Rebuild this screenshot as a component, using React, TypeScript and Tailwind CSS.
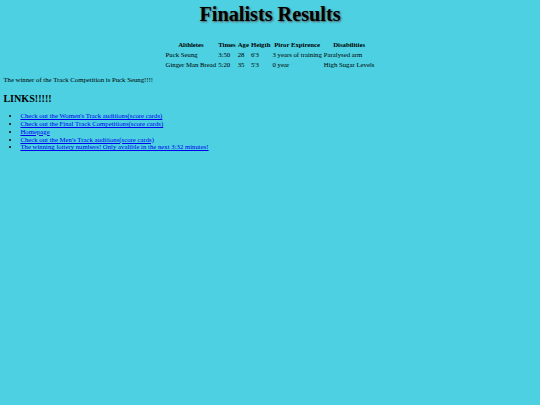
const rows = [
  ["Puck Seung", "3:50", "28", "6'3", "3 years of training", "Paralysed arm"],
  ["Ginger Man Bread", "5:20", "35", "5'3", "0 year", "High Sugar Levels"],
];

const links = [
  "Check out the Women's Track auditions(score cards)",
  "Check out the Final Track Competitions(score cards)",
  "Homepage",
  "Check out the Men's Track auditions(score cards)",
  "The winning lottery numbers! Only avalible in the next 3:32 minutes!",
];

export default function App() {
  return (
    <div className="min-h-screen bg-[#4dd0e1] px-[3.4px] pt-[3px] font-['Liberation_Serif',serif] text-[6.75px] text-black">
      <h1 className="text-center text-[20.25px] font-bold leading-[23px] [text-shadow:1px_1px_2px_#555]">
        Finalists Results
      </h1>

      <table className="mx-auto mt-[14px] border-separate border-spacing-x-[1px] border-spacing-y-0">
        <thead>
          <tr className="h-[10px] leading-[8px]">
            {["Althletes", "Times", "Age", "Heigth", "Piror Expirence", "Disabilities"].map((h) => (
              <th key={h} className="px-[0.5px] text-center font-bold">
                {h}
              </th>
            ))}
          </tr>
        </thead>
        <tbody>
          {rows.map((r) => (
            <tr key={r[0]} className="h-[10px] leading-[8px]">
              {r.map((c, i) => (
                <td key={i} className="px-[0.5px] text-left whitespace-nowrap">
                  {c}
                </td>
              ))}
            </tr>
          ))}
        </tbody>
      </table>

      <p className="mt-[6px] leading-[7.8px]">The winner of the Track Competition is Puck Seung!!!!</p>

      <h2 className="mt-[9px] text-[10.1px] font-bold leading-[11.6px]">LINKS!!!!!</h2>

      <ul className="mt-[8px] list-disc pl-[17px] leading-[7.7px]">
        {links.map((l) => (
          <li key={l}>
            <a href="#" className="text-[#0000ee] underline">
              {l}
            </a>
          </li>
        ))}
      </ul>
    </div>
  );
}
